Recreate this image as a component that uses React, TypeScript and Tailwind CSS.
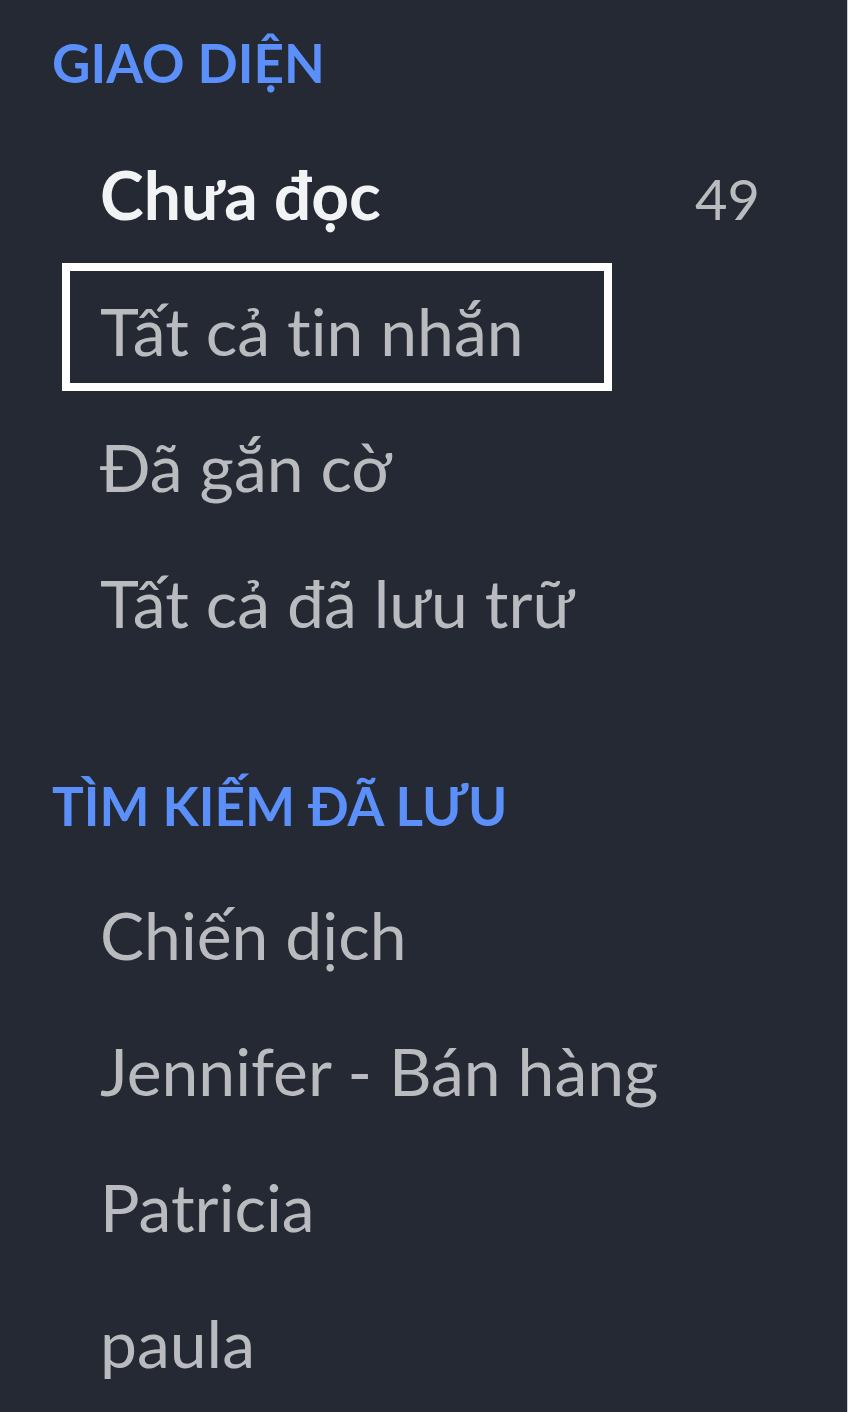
const views = ["Chưa đọc", "Tất cả tin nhắn", "Đã gắn cờ", "Tất cả đã lưu trữ"]
const searches = ["Chiến dịch", "Jennifer - Bán hàng", "Patricia", "paula"]

function Row({ label, focused, bold, count }: { label: string; focused?: boolean; bold?: boolean; count?: number }) {
  return (
    <li className="h-[136px]">
      <div
        className={`ml-[62px] h-[128px] pt-[20px] pl-[30px] border-8 ${
          focused ? "border-white" : "border-transparent"
        } ${count !== undefined ? "w-[733px] pr-[27px]" : "w-[550px]"}`}
      >
        <div className="flex items-baseline justify-between whitespace-nowrap">
          <span className={bold ? "font-bold text-[#f2f3f5]" : "text-[#b9bbbe]"}>{label}</span>
          {count !== undefined && <span className="text-[56px] text-[#b9bbbe]">{count}</span>}
        </div>
      </div>
    </li>
  )
}

function Heading({ children }: { children: string }) {
  return (
    <h2 className="pl-[52px] text-[53px] leading-[64px] font-bold text-[#5b8ff9] uppercase whitespace-nowrap">
      {children}
    </h2>
  )
}

export default function App() {
  return (
    <div className="w-[848px] h-[1412px] bg-[#252934] border-r border-[#c9cacd] overflow-hidden font-['Lato','Noto_Sans',sans-serif] [font-variant-ligatures:none]">
      <div className="pt-[31px]">
        <Heading>Giao diện</Heading>
        <ul className="mt-[32px] text-[66px] leading-[79px]">
          {views.map((v, i) => (
            <Row key={v} label={v} bold={i === 0} count={i === 0 ? 49 : undefined} focused={i === 1} />
          ))}
        </ul>
      </div>

      <div className="mt-[103px]">
        <Heading>Tìm kiếm đã lưu</Heading>
        <ul className="mt-[29px] text-[66px] leading-[79px]">
          {searches.map(s => (
            <Row key={s} label={s} />
          ))}
        </ul>
      </div>
    </div>
  )
}
